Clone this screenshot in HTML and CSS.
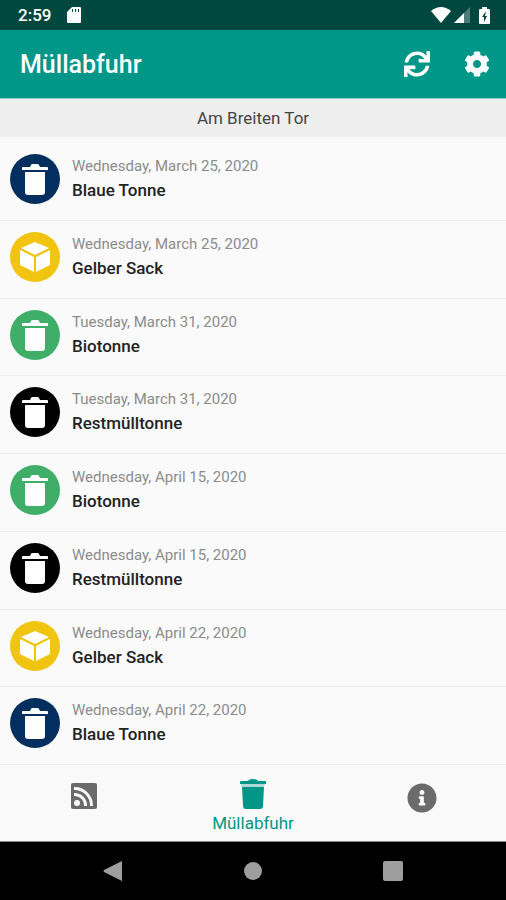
FILE: index.html
```html
<!DOCTYPE html>
<html lang="de">
<head>
  <meta charset="UTF-8">
  <meta name="viewport" content="width=device-width, initial-scale=1.0">
  <title>Müllabfuhr</title>
  <link rel="stylesheet" href="styles.css">
</head>
<body>

<!-- Icons -->
<svg class="sprite" aria-hidden="true">
  <symbol id="tonne" viewBox="0 0 28 32">
    <path d="M1 5Q1 4 2 4H9L10 2Q10 1 12 1H16Q18 1 18 2L19 4H26Q27 4 27 5V7H1Z"/>
    <path d="M4 9H24V29Q24 32 21 32H7Q4 32 4 29Z"/>
  </symbol>
  <symbol id="sack" viewBox="0 0 32 32">
    <path d="M16 1L30 7L16 14L2 7Z"/>
    <path d="M1 9L15 16V31L1 24Z"/>
    <path d="M31 9L17 16V31L31 24Z"/>
  </symbol>
</svg>

<!-- Statusleiste -->
<div class="status">
  <span class="time">2:59</span>
  <svg width="14" height="16" viewBox="0 0 14 16"><path d="M5 0H13Q14 0 14 1V15Q14 16 13 16H1Q0 16 0 15V5ZM5 2V5H6V2ZM8 2V5H9V2ZM11 2V5H12V2Z" fill="#fff" fill-rule="evenodd"/></svg>
  <div class="status-right">
    <svg width="20" height="16" viewBox="0 0 20 16"><path d="M0 4Q10-4 20 4L10 16Z" fill="#fff"/></svg>
    <svg width="16" height="16" viewBox="0 0 16 16"><path d="M16 0V16H0Z" fill="#4d7c76"/><path d="M10 6V16H0Z" fill="#fff"/></svg>
    <svg class="battery" width="11" height="17" viewBox="0 0 11 17"><path d="M3 0H8V2H10Q11 2 11 3V16Q11 17 10 17H1Q0 17 0 16V3Q0 2 1 2H3Z" fill="#fff"/><path d="M7 4L3 10H5V15L8 9H6Z" fill="#00483f"/></svg>
  </div>
</div>

<header class="header">
  <h1>Müllabfuhr</h1>
  <button class="icon-button" aria-label="Aktualisieren">
    <svg width="26" height="26" viewBox="0 0 512 512"><path d="M440.65 12.57l4 82.77A247.16 247.16 0 0 0 255.83 8C134.73 8 33.91 94.92 12.29 209.82A12 12 0 0 0 24.09 224h49.05a12 12 0 0 0 11.67-9.26 175.91 175.91 0 0 1 317-56.94l-101.46-4.86a12 12 0 0 0-12.57 12v47.41a12 12 0 0 0 12 12H500a12 12 0 0 0 12-12V12a12 12 0 0 0-12-12h-47.37a12 12 0 0 0-11.98 12.57zM255.83 432a175.61 175.61 0 0 1-146-77.8l101.8 4.87a12 12 0 0 0 12.57-12v-47.4a12 12 0 0 0-12-12H12a12 12 0 0 0-12 12V500a12 12 0 0 0 12 12h47.35a12 12 0 0 0 12-12.6l-4.15-82.57A247.17 247.17 0 0 0 255.83 504c121.11 0 221.93-86.92 243.55-201.82a12 12 0 0 0-11.8-14.18h-49.05a12 12 0 0 0-11.67 9.26A175.86 175.86 0 0 1 255.83 432z"/></svg>
  </button>
  <button class="icon-button" aria-label="Einstellungen">
    <svg width="26" height="26" viewBox="0 0 512 512"><path d="M487.4 315.7l-42.6-24.6c4.3-23.2 4.3-47 0-70.2l42.6-24.6c4.9-2.8 7.1-8.6 5.5-14-11.1-35.6-30-67.8-54.7-94.6-3.8-4.1-10-5.1-14.8-2.3L380.8 110c-17.9-15.4-38.5-27.3-60.8-35.1V25.8c0-5.6-3.9-10.5-9.4-11.7-36.7-8.2-74.3-7.8-109.2 0-5.5 1.2-9.4 6.1-9.4 11.7V75c-22.2 7.9-42.8 19.8-60.8 35.1L88.7 85.5c-4.9-2.8-11-1.9-14.8 2.3-24.7 26.7-43.6 58.9-54.7 94.6-1.7 5.4.6 11.2 5.5 14L67.3 221c-4.3 23.2-4.3 47 0 70.2l-42.6 24.6c-4.9 2.8-7.1 8.6-5.5 14 11.1 35.6 30 67.8 54.7 94.6 3.8 4.1 10 5.1 14.8 2.3l42.6-24.6c17.9 15.4 38.5 27.3 60.8 35.1v49.2c0 5.6 3.9 10.5 9.4 11.7 36.7 8.2 74.3 7.8 109.2 0 5.5-1.2 9.4-6.1 9.4-11.7v-49.2c22.2-7.9 42.8-19.8 60.8-35.1l42.6 24.6c4.9 2.8 11 1.9 14.8-2.3 24.7-26.7 43.6-58.9 54.7-94.6 1.5-5.5-.7-11.3-5.6-14.1zM256 336c-44.1 0-80-35.9-80-80s35.9-80 80-80 80 35.9 80 80-35.9 80-80 80z"/></svg>
  </button>
</header>

<div class="street">Am Breiten Tor</div>

<!-- Termine -->
<ul class="list">
  <li class="item">
    <span class="circle blau"><svg width="28" height="32"><use href="#tonne"/></svg></span>
    <div><p class="date">Wednesday, March 25, 2020</p><p class="name">Blaue Tonne</p></div>
  </li>
  <li class="item">
    <span class="circle gelb"><svg width="32" height="32"><use href="#sack"/></svg></span>
    <div><p class="date">Wednesday, March 25, 2020</p><p class="name">Gelber Sack</p></div>
  </li>
  <li class="item">
    <span class="circle gruen"><svg width="28" height="32"><use href="#tonne"/></svg></span>
    <div><p class="date">Tuesday, March 31, 2020</p><p class="name">Biotonne</p></div>
  </li>
  <li class="item">
    <span class="circle schwarz"><svg width="28" height="32"><use href="#tonne"/></svg></span>
    <div><p class="date">Tuesday, March 31, 2020</p><p class="name">Restmülltonne</p></div>
  </li>
  <li class="item">
    <span class="circle gruen"><svg width="28" height="32"><use href="#tonne"/></svg></span>
    <div><p class="date">Wednesday, April 15, 2020</p><p class="name">Biotonne</p></div>
  </li>
  <li class="item">
    <span class="circle schwarz"><svg width="28" height="32"><use href="#tonne"/></svg></span>
    <div><p class="date">Wednesday, April 15, 2020</p><p class="name">Restmülltonne</p></div>
  </li>
  <li class="item">
    <span class="circle gelb"><svg width="32" height="32"><use href="#sack"/></svg></span>
    <div><p class="date">Wednesday, April 22, 2020</p><p class="name">Gelber Sack</p></div>
  </li>
  <li class="item">
    <span class="circle blau"><svg width="28" height="32"><use href="#tonne"/></svg></span>
    <div><p class="date">Wednesday, April 22, 2020</p><p class="name">Blaue Tonne</p></div>
  </li>
</ul>

<!-- Tabs -->
<nav class="tabs">
  <a href="#news" class="tab" aria-label="News">
    <svg width="26" height="26" viewBox="0 0 26 26">
      <rect width="26" height="26" rx="2" fill="#6b6b6b"/>
      <circle cx="6" cy="20" r="3" fill="#fafafa"/>
      <path d="M3 11.5A11 11 0 0 1 14.500 23M3 5.500A17 17 0 0 1 20.500 23" fill="none" stroke="#fafafa" stroke-width="3"/>
    </svg>
  </a>
  <a href="#termine" class="tab active">
    <svg width="26" height="30" viewBox="0 0 26 30">
      <path d="M0 3Q0 2 1 2H8Q9 0 13 0T18 2H25Q26 2 26 3V5H0Z"/>
      <path d="M1 5H25L24 8H2Z" opacity=".3"/>
      <path d="M2 8H24L23 27Q23 30 20 30H6Q3 30 3 27Z"/>
    </svg>
    <span>Müllabfuhr</span>
  </a>
  <a href="#info" class="tab" aria-label="Info">
    <svg width="30" height="30" viewBox="0 0 512 512"><path d="M256 8C119.043 8 8 119.083 8 256c0 136.997 111.043 248 248 248s248-111.003 248-248C504 119.083 392.957 8 256 8zm0 110c23.196 0 42 18.804 42 42s-18.804 42-42 42-42-18.804-42-42 18.804-42 42-42zm56 254c0 6.627-5.373 12-12 12h-88c-6.627 0-12-5.373-12-12v-24c0-6.627 5.373-12 12-12h12v-64h-12c-6.627 0-12-5.373-12-12v-24c0-6.627 5.373-12 12-12h64c6.627 0 12 5.373 12 12v100h12c6.627 0 12 5.373 12 12v24z"/></svg>
  </a>
</nav>

<!-- Android-Navigation -->
<div class="system">
  <button aria-label="Zurück"><svg width="20" height="20" viewBox="0 0 20 20"><path d="M19 0V20L1 11Q0 10 1 9Z"/></svg></button>
  <button aria-label="Start"><svg width="20" height="20" viewBox="0 0 20 20"><circle cx="10" cy="10" r="9"/></svg></button>
  <button aria-label="Übersicht"><svg width="20" height="20" viewBox="0 0 20 20"><rect width="20" height="20" rx="2"/></svg></button>
</div>

</body>
</html>
```
FILE: styles.css
```css
* {
  box-sizing: border-box;
}

body {
  margin: 0;
  min-height: 100vh;
  display: flex;
  flex-direction: column;
  background-color: #fafafa;
  font-family: Roboto, "Liberation Sans", sans-serif;
}

svg {
  display: block;
  fill: currentColor;
}

.sprite {
  display: none;
}

button {
  padding: 0;
  border: none;
  background: none;
  color: inherit;
  cursor: pointer;
}

/* Statusleiste */
.status {
  display: flex;
  align-items: center;
  gap: 16px;
  height: 30px;
  padding: 0 16px 0 18px;
  background-color: #00483f;
  color: #fff;
}

.time {
  font-size: 17px;
  font-weight: 500;
}

.status-right {
  display: flex;
  align-items: center;
  gap: 3px;
  margin-left: auto;
}

.battery {
  margin-left: 6px;
}

.header {
  display: flex;
  align-items: center;
  gap: 34px;
  height: 69px;
  padding: 0 16px 0 20px;
  background-color: #009688;
  border-bottom: 1px solid #8fcfc8;
  color: #fff;
}

h1 {
  flex: 1;
  margin: 0;
  font-size: 25px;
  font-weight: 500;
}

.street {
  padding: 8px;
  background-color: #eee;
  color: #444;
  font-size: 17px;
  line-height: 22px;
  text-align: center;
}

/* Termine */
.list {
  flex: 1;
  display: flex;
  flex-direction: column;
  margin: 0;
  padding: 6px 0 0;
  list-style: none;
}

.item {
  flex: 1;
  display: flex;
  align-items: flex-start;
  gap: 12px;
  padding: 11px 10px 0;
  border-bottom: 1px solid #ededed;
}

.item p {
  margin: 0;
  line-height: 24px;
}

.circle {
  display: flex;
  align-items: center;
  justify-content: center;
  width: 50px;
  height: 50px;
  border-radius: 50%;
  color: #fff;
}

.blau {
  background-color: #022f5d;
}

.gelb {
  background-color: #f1c40f;
}

.gruen {
  background-color: #3fae68;
}

.schwarz {
  background-color: #000;
}

.date {
  color: #8c8c8c;
  font-size: 15px;
}

.name {
  color: #222;
  font-size: 17px;
  font-weight: 500;
}

/* Tabs */
.tabs {
  display: flex;
  height: 77px;
  border-bottom: 1px solid #888;
}

.tab {
  flex: 1;
  display: flex;
  flex-direction: column;
  align-items: center;
  padding-top: 18px;
  color: #6b6b6b;
  text-decoration: none;
}

.tab.active {
  padding-top: 14px;
  color: #009688;
  font-size: 17px;
  line-height: 28px;
}

.system {
  display: flex;
  align-items: center;
  justify-content: center;
  gap: 120px;
  height: 58px;
  background-color: #000;
  color: #9e9e9e;
}
```
